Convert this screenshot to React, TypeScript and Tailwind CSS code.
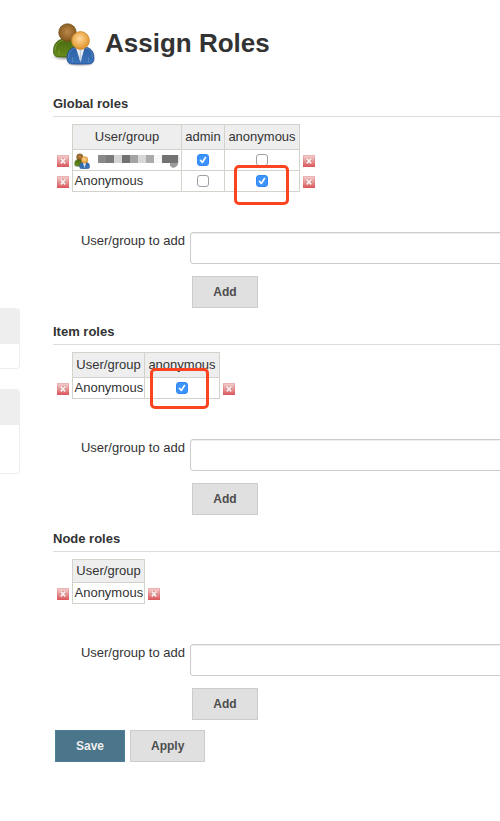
import React, { useId, useState } from "react";

type RowData = { name: string; masked?: boolean; checks: boolean[] };
type TableData = {
  title: string;
  columns: string[];
  widths: string[];
  rows: RowData[];
  tableClass: string;
  headClass: string;
  highlightClass?: string;
};

const tables: TableData[] = [
  {
    title: "Global roles",
    columns: ["admin", "anonymous"],
    widths: ["w-[109px]", "w-[43px]", "w-[75px]"],
    rows: [
      { name: "user", masked: true, checks: [true, false] },
      { name: "Anonymous", checks: [false, true] },
    ],
    tableClass: "w-[266px]",
    headClass: "h-[25px]",
    highlightClass: "-top-[6px] left-[9px] h-10 w-[55px]",
  },
  {
    title: "Item roles",
    columns: ["anonymous"],
    widths: ["w-[72px]", "w-[75px]"],
    rows: [{ name: "Anonymous", checks: [true] }],
    tableClass: "w-[186px]",
    headClass: "h-[25px]",
    highlightClass: "-top-[10px] left-[5px] h-[41px] w-[59px]",
  },
  {
    title: "Node roles",
    columns: [],
    widths: ["w-[72px]"],
    rows: [{ name: "Anonymous", checks: [] }],
    tableClass: "w-[111px]",
    headClass: "h-[23px]",
  },
];

function Users({ className, viewBox = "0 0 48 48" }: { className: string; viewBox?: string }) {
  const id = useId().replace(/:/g, "");
  return (
    <svg viewBox={viewBox} className={className} aria-hidden="true">
      <defs>
        <radialGradient id={id + "a"} cx=".5" cy=".45" r=".6">
          <stop offset="0" stopColor="#bb8748" />
          <stop offset="1" stopColor="#80541a" />
        </radialGradient>
        <radialGradient id={id + "b"} cx=".45" cy=".4" r=".6">
          <stop offset="0" stopColor="#ffd9a0" />
          <stop offset=".55" stopColor="#efb25a" />
          <stop offset="1" stopColor="#dc932e" />
        </radialGradient>
        <linearGradient id={id + "c"} x2="0" y2="1">
          <stop offset="0" stopColor="#48690f" />
          <stop offset="1" stopColor="#668c1b" />
        </linearGradient>
        <linearGradient id={id + "d"} x2="0" y2="1">
          <stop offset="0" stopColor="#2c5fa5" />
          <stop offset="1" stopColor="#3a74ba" />
        </linearGradient>
        <radialGradient id={id + "e"}>
          <stop offset="0" stopColor="#000" stopOpacity=".4" />
          <stop offset="1" stopColor="#000" stopOpacity="0" />
        </radialGradient>
      </defs>
      <ellipse cx="16" cy="38" rx="14" ry="4" fill={`url(#${id}e)`} />
      <ellipse cx="31" cy="44.500" rx="15" ry="3.500" fill={`url(#${id}e)`} />
      <path d="M4.500 32c0-8 5-12 11-12h5c6 0 10 4 10 12 0 4-3 6-7 6H10c-4 0-5.500-2-5.500-6Z" fill={`url(#${id}c)`} stroke="#3d5c0d" strokeWidth=".8" />
      <path d="M6 32c0-6 3.500-10 9-10.500M10 36v-5" fill="none" stroke="#8aab42" strokeWidth=".7" />
      <circle cx="18.500" cy="13.500" r="8.700" fill={`url(#${id}a)`} stroke="#744e18" strokeWidth=".8" />
      <path d="M18 39c0-7 4-11 10-11h7c6 0 10 4 10 11 0 4.500-2 6-6 6H24c-4 0-6-1.500-6-6Z" fill={`url(#${id}d)`} stroke="#204a87" strokeWidth=".8" />
      <path d="M19.300 39c0-6 3-9.500 8-10M36 29c5 .5 7.700 4 7.700 10M23.500 43.500v-5M39.500 43.500v-5" fill="none" stroke="#6795cd" strokeWidth=".6" />
      <path d="m27 29 4.500 14 4-14Z" fill="#edf1f6" />
      <path d="m30.500 31 2.200 0-.7 3 .6 6-1.100 3-1.200-3 .6-6Z" fill="#c2cede" />
      <circle cx="31.500" cy="21.500" r="8.900" fill={`url(#${id}b)`} stroke="#cb8627" strokeWidth=".8" />
    </svg>
  );
}

function DeleteButton({ label }: { label: string }) {
  return (
    <button type="button" aria-label={label} className="block h-3 w-3">
      <svg viewBox="0 0 12 12" className="block h-3 w-3" aria-hidden="true">
        <defs>
          <linearGradient id="deleteFill" x2="0" y2="1">
            <stop offset="0" stopColor="#f6cdcd" />
            <stop offset=".5" stopColor="#e59a9b" />
            <stop offset="1" stopColor="#e0565a" />
          </linearGradient>
          <linearGradient id="deleteEdge" x2="0" y2="1">
            <stop offset="0" stopColor="#eab4b4" />
            <stop offset="1" stopColor="#d95c5f" />
          </linearGradient>
        </defs>
        <rect x=".5" y=".5" width="11" height="11" fill="url(#deleteFill)" stroke="url(#deleteEdge)" />
        <path d="m4 4 4 4.500M8 4 4 8.500" stroke="#d17f80" strokeWidth="3" />
        <path d="m3.800 3.700 4.400 4.600m0-4.600L3.800 8.300" stroke="#fbf1f1" strokeWidth="1.700" />
      </svg>
    </button>
  );
}

function Check({ initial, label }: { initial: boolean; label: string }) {
  const [on, setOn] = useState(initial);
  return (
    <span className="mx-auto grid h-3 w-3">
      <input
        type="checkbox"
        aria-label={label}
        checked={on}
        onChange={() => setOn(!on)}
        className="col-start-1 row-start-1 h-3 w-3 appearance-none rounded-[3px] border border-[#a0a0a0] bg-white checked:border-[#3387f5] checked:bg-[#3b93fb]"
      />
      {on && (
        <svg viewBox="0 0 12 12" className="pointer-events-none col-start-1 row-start-1 h-3 w-3" aria-hidden="true">
          <path d="m3.500 6.300 1.800 2.200 3.200-5" fill="none" stroke="#fff" strokeWidth="1.600" strokeLinecap="round" strokeLinejoin="round" />
        </svg>
      )}
    </span>
  );
}

function MaskedName() {
  return (
    <span className="flex items-center gap-2">
      <Users className="h-4 w-4 shrink-0" viewBox="3 3 43 43" />
      <svg viewBox="0 0 82 14" className="h-[14px] w-[82px]" role="img" aria-label="Hidden user name">
        <path d="M0 1h16v8H0z" fill="#898989" />
        <path d="M8 1h8v8H8z" fill="#7b7b7b" />
        <path d="M16 1h8v8h-8z" fill="#d5d5d5" />
        <path d="M24 1h8v8h-8z" fill="#727272" />
        <path d="M32 1h8v8h-8z" fill="#a3a3a3" />
        <path d="M40 1h8v8h-8z" fill="#d8d8d8" />
        <path d="M48 1h8v8h-8z" fill="#ababab" />
        <path d="M56 1h8v8h-8z" fill="#f7f7f7" />
        <path d="M64 1h16v8H64z" fill="#737373" />
        <path d="M72 9h8c0 3-2 4-5 5l-3-2Z" fill="#9b9b9b" />
        <path d="M80 1c2 1 3 5 0 9Z" fill="#e8e8e8" />
      </svg>
    </span>
  );
}

const cell = "border border-[#d3d3cb]";
const grayButton = "h-8 border border-[#ccc] bg-[#e0e0e0] px-5 text-[12px] font-bold text-[#4d4d4d]";

function RoleSection({ data }: { data: TableData }) {
  const id = useId();
  return (
    <section className="mb-[14px] last:mb-0">
      <h2 className="border-b border-[#ddd] pb-[2px] text-[13px] leading-5 font-bold">{data.title}</h2>
      <table className={`mt-[7px] table-fixed border-collapse text-[13px] leading-4 ${data.tableClass}`}>
        <colgroup>
          <col className="w-[19px]" />
          {data.widths.map((w, i) => (
            <col key={i} className={w} />
          ))}
          <col className="w-5" />
        </colgroup>
        <thead>
          <tr className={data.headClass}>
            <td />
            <th scope="col" className={`${cell} bg-[#eee] p-0 pl-px font-normal`}>User/group</th>
            {data.columns.map((c) => (
              <th key={c} scope="col" className={`${cell} bg-[#eee] p-0 pl-px font-normal`}>{c}</th>
            ))}
            <td />
          </tr>
        </thead>
        <tbody>
          {data.rows.map((row, r) => (
            <tr key={r} className="h-[21px]">
              <td className="p-0 pt-[2px] pl-1"><DeleteButton label={`Remove ${row.name}`} /></td>
              <td className={row.masked ? `${cell} p-0 pt-px pl-px` : `${cell} p-0 pl-[2px]`}>{row.masked ? <MaskedName /> : row.name}</td>
              {row.checks.map((on, i) => (
                <td key={i} className={`${cell} relative p-0`}>
                  <Check initial={on} label={`${row.name}: ${data.columns[i]}`} />
                  {data.highlightClass && r === data.rows.length - 1 && i === row.checks.length - 1 && (
                    <span className={`pointer-events-none absolute rounded-[5px] border-3 border-[#fc4420] ${data.highlightClass}`} />
                  )}
                </td>
              ))}
              <td className="p-0 pt-[2px] pl-[3px]"><DeleteButton label={`Remove ${row.name}`} /></td>
            </tr>
          ))}
        </tbody>
      </table>
      <div className="mt-10 flex">
        <label htmlFor={id} className="w-[137px] shrink-0 pr-[5px] text-right text-[13px] leading-[18px]">User/group to add</label>
        <input id={id} type="text" className="-mr-2 h-8 min-w-0 flex-1 rounded-[3px] border border-[#ccc] bg-white px-2 text-[13px] shadow-[inset_0_1px_1px_#00000013]" />
      </div>
      <div className="mt-3 pl-[139px]">
        <button type="button" className={`${grayButton} block w-[66px]`}>Add</button>
      </div>
    </section>
  );
}

export default function App() {
  return (
    <div className="flex min-h-screen overflow-hidden bg-white font-['Liberation_Sans',Arial,sans-serif] text-[#333]">
      <aside className="flex w-5 shrink-0 flex-col gap-5 pt-[308px]">
        <div className="overflow-hidden rounded-r-[4px] border border-l-0 border-[#eee]">
          <div className="h-[35px] bg-[#eee]" />
          <div className="h-6" />
        </div>
        <div className="overflow-hidden rounded-r-[4px] border border-l-0 border-[#eee]">
          <div className="h-[35px] bg-[#eee]" />
          <div className="h-12" />
        </div>
      </aside>
      <main className="min-w-0 flex-1 pl-[33px]">
        <h1 className="-ml-1 flex items-center gap-2 pt-[19px] pb-[27px] text-[26px] leading-8 font-bold">
          <Users className="h-12 w-12" />
          Assign Roles
        </h1>
        <form onSubmit={(e) => e.preventDefault()}>
          <div>
            {tables.map((t) => (
              <RoleSection key={t.title} data={t} />
            ))}
          </div>
          <div className="mt-[10px] flex gap-[5px] pl-[2px]">
            <button type="submit" className="h-8 w-[70px] border border-[#4c8197] bg-[#4b758b] text-[12px] font-bold text-[#eee]">Save</button>
            <button type="button" className={`${grayButton} w-[75px]`}>Apply</button>
          </div>
        </form>
      </main>
    </div>
  );
}
